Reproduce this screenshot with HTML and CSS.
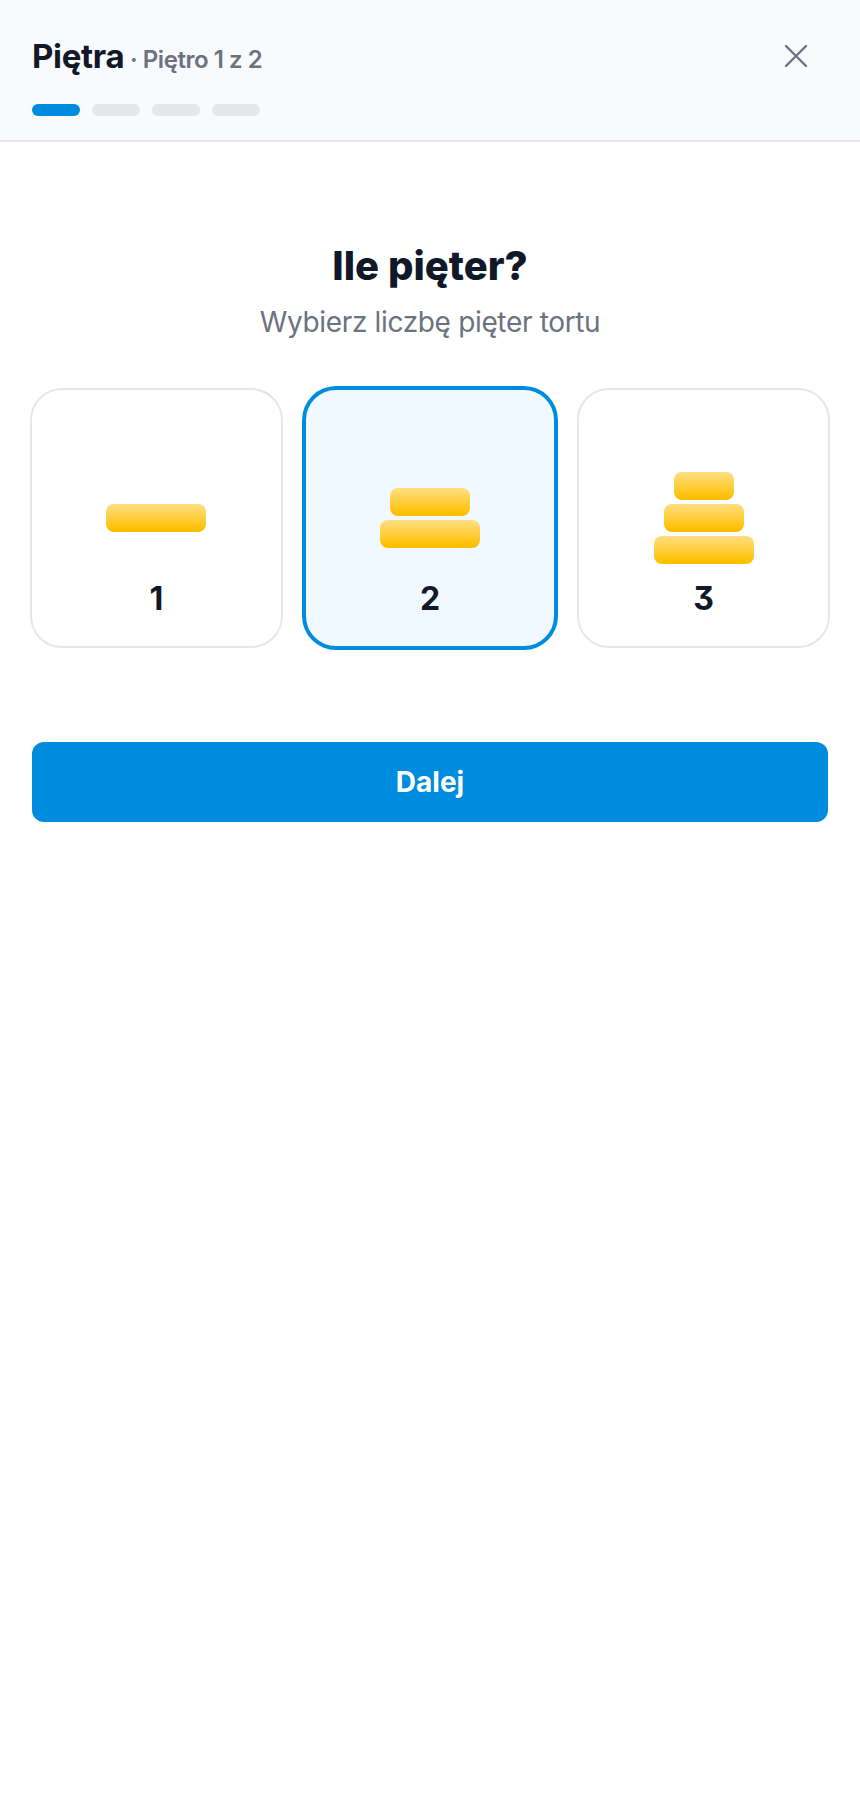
FILE: index.html
```html
<!DOCTYPE html>
<html lang="pl">
<head>
<meta charset="utf-8">
<title>Piętra</title>
<link rel="stylesheet" href="styles.css">
</head>
<body>
<header class="top">
  <div class="top-row">
    <h1 class="title">Piętra<span class="step"> · Piętro 1 z 2</span></h1>
    <button class="close" aria-label="Zamknij">
      <svg width="32" height="32" viewBox="0 0 32 32" fill="none" stroke="#6b7280" stroke-width="2.4" stroke-linecap="round"><path d="M6 6 26 26M26 6 6 26"/></svg>
    </button>
  </div>
  <div class="progress">
    <span class="seg seg-on"></span><span class="seg"></span><span class="seg"></span><span class="seg"></span>
  </div>
</header>
<main class="content">
  <h2 class="q">Ile pięter?</h2>
  <p class="hint">Wybierz liczbę pięter tortu</p>
  <div class="cards">
    <div class="card">
      <div class="cake"><i class="layer l100"></i></div>
      <div class="num">1</div>
    </div>
    <div class="card card-on">
      <div class="cake"><i class="layer l80"></i><i class="layer l100"></i></div>
      <div class="num">2</div>
    </div>
    <div class="card">
      <div class="cake"><i class="layer l60"></i><i class="layer l80"></i><i class="layer l100"></i></div>
      <div class="num">3</div>
    </div>
  </div>
  <button class="next">Dalej</button>
</main>
</body>
</html>
```
FILE: styles.css
```css
* { box-sizing: border-box; }
html, body { margin: 0; background: #fff; }
body { font-family: Inter, "Noto Sans", sans-serif; color: #111827; }
.top { height: 142px; background: #f9fafb; border-bottom: 2px solid #e5e7eb; padding: 32px 32px 0; }
.top-row { display: flex; justify-content: space-between; align-items: flex-start; height: 72px; }
.title { margin: 0; font-size: 33px; line-height: 48px; font-weight: 700; letter-spacing: -0.3px; }
.step { font-size: 24px; font-weight: 600; color: #6b7280; letter-spacing: -0.45px; }
.close { border: 0; background: none; padding: 0; margin: 8px 16px 0 0; width: 32px; height: 32px; display: block; }
.close svg { display: block; }
.progress { display: flex; gap: 12px; }
.seg { width: 48px; height: 12px; border-radius: 6px; background: #e5e7eb; }
.seg-on { background: #008cde; }
.content { padding: 96px 30px 0; }
.q { margin: 0; text-align: center; font-size: 40px; line-height: 56px; font-weight: 800; letter-spacing: 0; }
.hint { margin: 8px 0 0; text-align: center; font-size: 28px; line-height: 40px; color: #6b7280; letter-spacing: -0.34px; }
.cards { display: grid; grid-template-columns: repeat(3, 1fr); gap: 20.6px; margin-top: 46px; }
.card { height: 260px; border: 2px solid #e5e7eb; border-radius: 32px; background: #fff; display: flex; flex-direction: column; align-items: center; }
.card-on { border-color: #008cde; box-shadow: 0 0 0 2px #008cde; background: #f0f9ff; }
.cake { height: 188px; display: flex; flex-direction: column; align-items: center; justify-content: center; gap: 4px; padding-top: 68px; }
.layer { display: block; height: 28px; border-radius: 8px; background: linear-gradient(180deg, #fee084, #ffbf00 92%); }
.l100 { width: 100px; }
.l80 { width: 80px; }
.l60 { width: 60px; }
.num { font-size: 32px; line-height: 40px; font-weight: 700; margin-top: 1px; font-feature-settings: "cv09"; }
.next { display: block; width: 796px; height: 80px; margin: 94px 2px 0; border: 0; border-radius: 12px; background: #008cde; color: #fff; font-family: inherit; font-size: 28px; font-weight: 700; }
```
